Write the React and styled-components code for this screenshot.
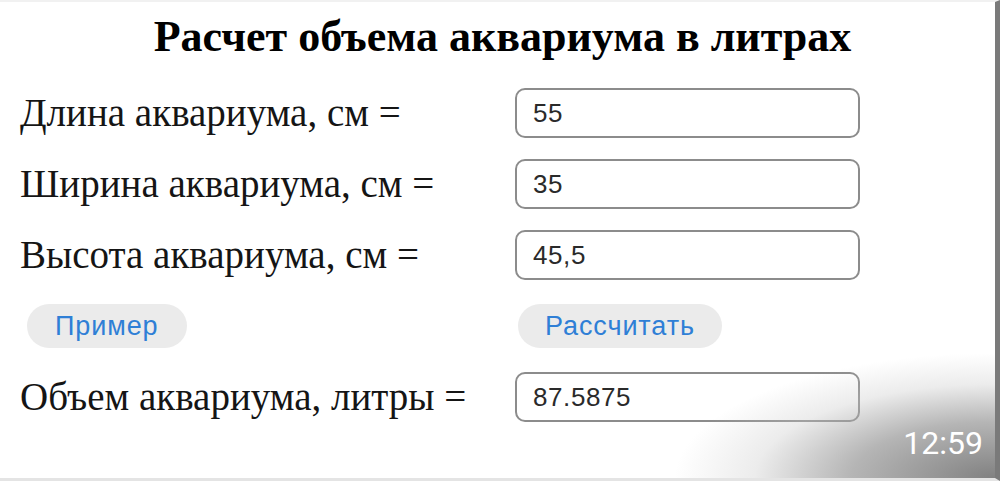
import React from "react"
import styled, { createGlobalStyle } from "styled-components"

const GlobalStyle = createGlobalStyle`
  html, body {
    margin: 0;
    padding: 0;
    background: #ffffff;
  }
`

const Frame = styled.div`
  position: relative;
  width: 1000px;
  height: 481px;
  box-sizing: border-box;
  overflow: hidden;
  background: #ffffff;
  border-top: 2px solid #f1f1f1;
  border-bottom: 3px solid #e4e4e4;
  border-right: 5px solid #7a7a7a;
`

const Page = styled.div`
  padding: 10px 0 0 20px;
`

const Title = styled.h1`
  margin: 0 0 26px;
  padding-right: 10px;
  text-align: center;
  font-family: "Liberation Serif", "Times New Roman", serif;
  font-weight: 700;
  font-size: 44px;
  line-height: 50px;
  color: #000;
`

const Form = styled.div`
  display: grid;
  grid-template-columns: 495px 345px;
  grid-auto-rows: 50px;
  row-gap: 21px;
  align-items: center;
`

const Label = styled.div`
  font-family: "Liberation Serif", "Times New Roman", serif;
  font-size: 39px;
  line-height: 50px;
  color: #151515;
`

const Field = styled.input`
  box-sizing: border-box;
  width: 345px;
  height: 50px;
  padding: 0 16px;
  border: 2px solid #8c8c8c;
  border-radius: 10px;
  background: #fff;
  font-family: "Liberation Sans", Arial, sans-serif;
  font-size: 26px;
  letter-spacing: 0.6px;
  color: #2a2a2a;
  outline: none;
`

const Pill = styled.button`
  justify-self: start;
  height: 44px;
  padding: 0 ${p => p.$pad}px;
  margin-left: ${p => p.$shift}px;
  border: none;
  border-radius: 22px;
  background: #ebebeb;
  color: #2f7fd6;
  font-family: "Liberation Sans", Arial, sans-serif;
  font-size: 27px;
  letter-spacing: 0.9px;
`

const Shade = styled.div`
  position: absolute;
  right: 0;
  bottom: 0;
  width: 320px;
  height: 130px;
  background: radial-gradient(ellipse 320px 125px at 100% 100%, rgba(115,115,115,0.9) 0%, rgba(150,150,150,0.7) 45%, rgba(200,200,200,0.35) 75%, rgba(255,255,255,0) 100%);
  pointer-events: none;
`

const Clock = styled.div`
  position: absolute;
  right: 12px;
  bottom: 16px;
  font-family: Roboto, "Liberation Sans", sans-serif;
  font-size: 32px;
  color: #fff;
`

const rows = [
  { label: "Длина аквариума, см =", value: "55" },
  { label: "Ширина аквариума, см =", value: "35" },
  { label: "Высота аквариума, см =", value: "45,5" },
]

export default function App() {
  return (
    <>
      <GlobalStyle />
      <Frame>
        <Page>
          <Title>Расчет объема аквариума в литрах</Title>
          <Form>
            {rows.map(r => (
              <React.Fragment key={r.label}>
                <Label>{r.label}</Label>
                <Field defaultValue={r.value} />
              </React.Fragment>
            ))}
            <Pill $pad={28} $shift={7}>Пример</Pill>
            <Pill $pad={27} $shift={3}>Рассчитать</Pill>
            <Label>Объем аквариума, литры =</Label>
            <Field defaultValue="87.5875" />
          </Form>
        </Page>
        <Shade />
        <Clock>12:59</Clock>
      </Frame>
    </>
  )
}
